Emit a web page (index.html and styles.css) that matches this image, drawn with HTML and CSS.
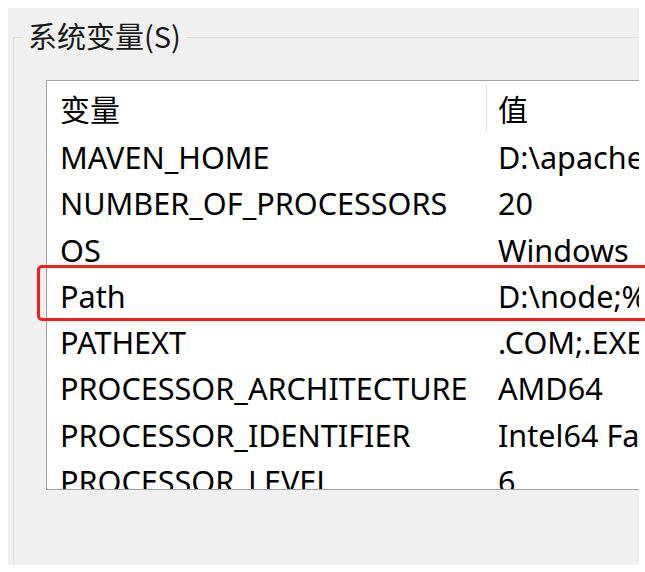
FILE: index.html
```html
<!DOCTYPE html>
<html>

<head>
	<title>系统变量</title>
	<link rel="stylesheet" href="styles.css">
</head>

<body>
	<div class="window">
		<fieldset class="group">
			<legend class="group-title">系统变量(S)</legend>
			<div class="listview">
				<div class="list-head">
					<div class="cell name">变量</div>
					<div class="cell value">值</div>
				</div>
				<div class="list-row">
					<div class="cell name">MAVEN_HOME</div>
					<div class="cell value">D:\apache-maven-3.8.6</div>
				</div>
				<div class="list-row">
					<div class="cell name">NUMBER_OF_PROCESSORS</div>
					<div class="cell value">20</div>
				</div>
				<div class="list-row">
					<div class="cell name">OS</div>
					<div class="cell value">Windows_NT</div>
				</div>
				<div class="list-row">
					<div class="cell name">Path</div>
					<div class="cell value">D:\node;%JAVA_HOME%\bin</div>
				</div>
				<div class="list-row">
					<div class="cell name">PATHEXT</div>
					<div class="cell value">.COM;.EXE;.BAT;.CMD</div>
				</div>
				<div class="list-row">
					<div class="cell name">PROCESSOR_ARCHITECTURE</div>
					<div class="cell value">AMD64</div>
				</div>
				<div class="list-row">
					<div class="cell name">PROCESSOR_IDENTIFIER</div>
					<div class="cell value">Intel64 Family 6 Model 154</div>
				</div>
				<div class="list-row">
					<div class="cell name">PROCESSOR_LEVEL</div>
					<div class="cell value">6</div>
				</div>
			</div>
		</fieldset>
	</div>
	<div class="highlight"></div>
</body>

</html>
```

FILE: styles.css
```css
body,
* {
	margin: 0;
	padding: 0;
	box-sizing: border-box;
}

body {
	position: relative;
	width: 645px;
	height: 572px;
	background: white;
	font-family: "Noto Sans", "Noto Sans CJK SC", sans-serif;
	color: #000;
	overflow: hidden;
}

.window {
	margin: 8px 0 0 8px;
	width: 631px;
	height: 557px;
	padding-top: 11px;
	background: #f0f0f0;
	overflow: hidden;
}

.group {
	margin-left: 5px;
	height: 600px;
	width: 700px;
	border: 1px solid #dcdcdc;
	border-right: 0;
	border-bottom: 0;
	min-width: 0;
}

.group-title {
	margin-left: 9px;
	padding: 0 5px;
	font-family: "Noto Sans CJK SC", sans-serif;
	font-size: 29px;
	line-height: 36px;
	color: #1a1a1a;
	position: relative;
	top: -2px;
}

.listview {
	margin: 25px 0 0 32px;
	width: 660px;
	height: 410px;
	background: white;
	border-top: 1px solid #a3a3a3;
	border-left: 1px solid #a3a3a3;
	border-bottom: 1px solid #a3a3a3;
	overflow: hidden;
}

.list-head,
.list-row {
	display: flex;
	white-space: nowrap;
}

.list-head {
	height: 53px;
	padding-top: 3px;
	font-family: "Noto Sans CJK SC", sans-serif;
}

.list-row {
	height: 46.3px;
}

.cell {
	font-size: 30.6px;
	line-height: 46px;
	flex-shrink: 0;
}

.cell.name {
	width: 440px;
	padding-left: 13px;
}

.cell.value {
	padding-left: 11px;
}

.list-head .cell {
	font-size: 30px;
	line-height: 48px;
	height: 49px;
}

.list-head .cell.name {
	border-right: 1px solid #e5e5e5;
}

.highlight {
	position: absolute;
	left: 37px;
	top: 265px;
	width: 640px;
	height: 56px;
	border: 3px solid #f41e1e;
	border-radius: 5px;
}
```
